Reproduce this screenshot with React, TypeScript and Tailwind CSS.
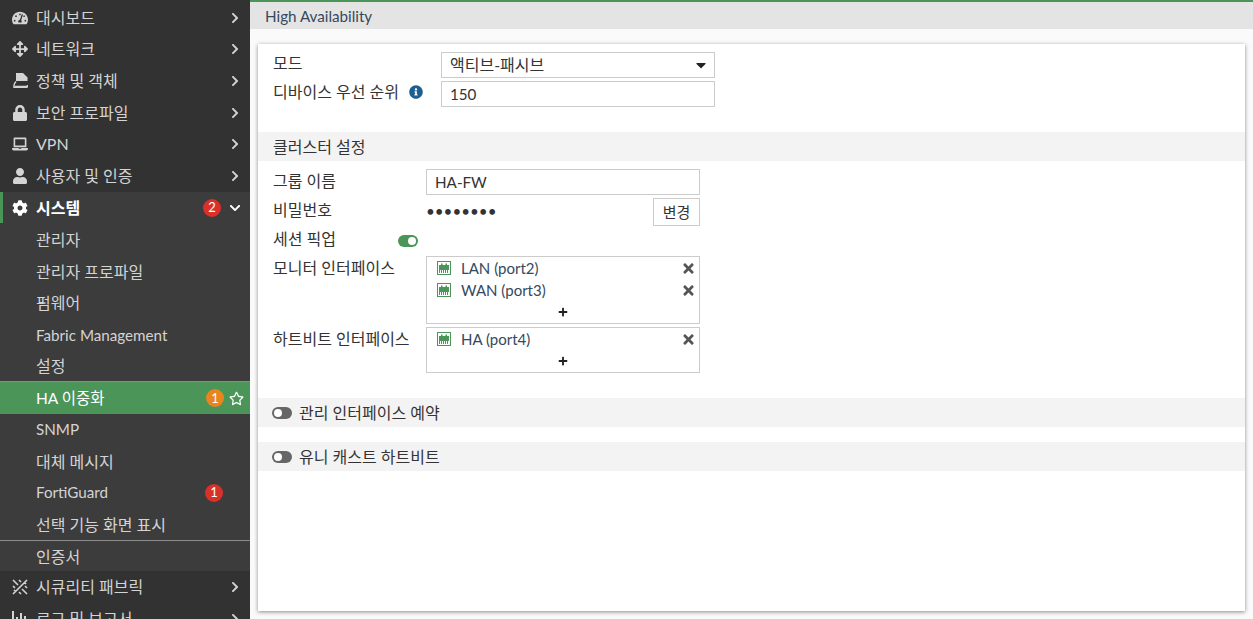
import { ReactNode } from 'react';
import { FaTachometerAlt, FaArrowsAlt, FaLock, FaLaptop, FaUser, FaCog, FaChevronRight, FaChevronDown, FaInfoCircle, FaTimes, FaPlus, FaCaretDown, FaRegStar } from 'react-icons/fa';

const font = 'font-[Lato,"Noto_Sans_CJK_KR",sans-serif]';

const PolicyIcon = () => (
    <svg width="15" height="15" viewBox="0 0 15 15">
        <path d="M3 0h7l4.5 4.5V8H3z" fill="#d4d4d4" />
        <path d="M3 8.5C2 9.5 1 10.5 1 12.5v2h13.5" fill="none" stroke="#d4d4d4" strokeWidth="1.5" />
        <path d="M2 13.5h12.5V12" fill="none" stroke="#d4d4d4" strokeWidth="1.5" />
    </svg>
);

const FabricIcon = () => (
    <svg width="16" height="16" viewBox="0 0 16 16" stroke="#d4d4d4" strokeWidth="1.6">
        <path d="M1 1l5 5M10 10l5 5M15 1L1 15M2 11l2 2M12 3l2 2M7 1l2 2M13 7l2 2M1 7l2 2M7 13l2 2" />
    </svg>
);

const ChartIcon = () => (
    <svg width="16" height="15" viewBox="0 0 16 15" fill="#d4d4d4">
        <path d="M0 0h2v13h14v2H0zM4 6h2v6H4zM8 2h2v10H8zM12 5h2v7h-2z" />
    </svg>
);

const PortIcon = () => (
    <svg width="14" height="14" viewBox="0 0 14 14" className="shrink-0">
        <rect x="0.5" y="0.5" width="13" height="13" fill="#fff" stroke="#4a9557" />
        <path d="M2 4h2V2.5h1.5V4h3V2.5H10V4h2v5H2z" fill="#4a9557" />
        <path d="M2.5 9v3M4.5 9v3M6.5 9v3M8.5 9v3M10.5 9v3" stroke="#4a9557" strokeWidth="1" />
    </svg>
);

const NavRow = ({ icon, label }: { icon: ReactNode, label: string }) => (
    <div className="h-[31.6px] flex items-center pl-[12px] pr-[9px] text-[#d4d4d4] bg-[#323232]">
        <span className="w-[16px] h-[16px] flex items-center justify-center text-[16px] shrink-0">{icon}</span>
        <span className="ml-[8px] flex-1 whitespace-nowrap">{label}</span>
        <FaChevronRight className="text-[12px]" />
    </div>
);

const SubRow = ({ label, border }: { label: string, border?: boolean }) => (
    <div className={`h-[31.6px] flex items-center pl-[36px] pr-[18px] pt-[2px] text-[#d4d4d4] ${border ? 'border-t border-[#8c8c8c]' : ''}`}>
        <span className="flex-1 whitespace-nowrap">{label}</span>
    </div>
);

const Toggle = ({ on }: { on?: boolean }) => (
    <span className={`relative inline-block w-[20px] h-[12px] rounded-full shrink-0 ${on ? 'bg-[#4a9557]' : 'bg-[#666666]'}`}>
        <span className={`absolute top-[2px] w-[8px] h-[8px] rounded-full bg-white ${on ? 'right-[2px]' : 'left-[2px]'}`} />
    </span>
);

const IfaceItem = ({ label }: { label: string }) => (
    <div className="h-[22px] flex items-center pl-[10px] pr-[3px]">
        <PortIcon />
        <span className="ml-[10px] flex-1 text-[#34495e]">{label}</span>
        <FaTimes className="text-[15px] text-[#555555]" />
    </div>
);

const AddRow = () => (
    <div className="h-[21px] flex items-center justify-center">
        <FaPlus className="text-[10px] text-[#222222]" />
    </div>
);

export default function App() {
    return (
        <div className={`${font} w-[1253px] h-[619px] overflow-hidden flex bg-[#fafafa] text-[15.2px]`}>
            {/* Sidebar */}
            <div className="w-[250px] h-[619px] shrink-0 overflow-hidden bg-[#323232] pt-[2px] text-[16px]">
                <NavRow icon={<FaTachometerAlt />} label="대시보드" />
                <NavRow icon={<FaArrowsAlt />} label="네트워크" />
                <NavRow icon={<PolicyIcon />} label="정책 및 객체" />
                <NavRow icon={<FaLock />} label="보안 프로파일" />
                <NavRow icon={<FaLaptop />} label="VPN" />
                <NavRow icon={<FaUser />} label="사용자 및 인증" />
                <div className="bg-[#3c3c3c]">
                    <div className="h-[31.6px] flex items-center pl-[9px] pr-[9px] pt-[1px] border-l-[3px] border-[#4a9557] text-white">
                        <FaCog className="text-[16px] shrink-0" />
                        <span className="ml-[8px] flex-1 font-bold">시스템</span>
                        <span className="w-[18px] h-[18px] mr-[8px] rounded-full bg-[#d9302a] text-[13px] flex items-center justify-center">2</span>
                        <FaChevronDown className="text-[12px]" />
                    </div>
                    <SubRow label="관리자" />
                    <SubRow label="관리자 프로파일" />
                    <SubRow label="펌웨어" />
                    <div className="h-[31.6px] flex items-center pl-[36px] pt-[3px] text-[#d4d4d4] text-[15.2px]">Fabric Management</div>
                    <SubRow label="설정" />
                    <div className="h-[32.4px] flex items-center pl-[36px] pr-[6px] pt-[1px] bg-[#4a9557] border-t border-[#8c8c8c] text-white">
                        <span className="flex-1 text-[15.5px]">HA 이중화</span>
                        <span className="w-[18px] h-[18px] mr-[5px] rounded-full bg-[#e8851e] text-[13px] flex items-center justify-center">1</span>
                        <FaRegStar className="text-[15px]" />
                    </div>
                    <div className="h-[31.6px] flex items-center pl-[36px] pt-[1px] text-[#d4d4d4] text-[15.2px]">SNMP</div>
                    <SubRow label="대체 메시지" />
                    <div className="h-[31.6px] flex items-center pl-[36px] pr-[18px] text-[#d4d4d4] text-[15.2px]">
                        <span className="flex-1">FortiGuard</span>
                        <span className="w-[18px] h-[18px] mr-[9px] rounded-full bg-[#d9302a] text-white text-[13px] flex items-center justify-center">1</span>
                    </div>
                    <SubRow label="선택 기능 화면 표시" />
                    <SubRow label="인증서" border />
                </div>
                <NavRow icon={<FabricIcon />} label="시큐리티 패브릭" />
                <NavRow icon={<ChartIcon />} label="로그 및 보고서" />
            </div>

            {/* Main */}
            <div className="flex-1 min-w-0 border-t-2 border-[#4a9557]">
                <div className="h-[27px] bg-[#e4e4e4] flex items-center pl-[15px] pt-[1px] text-[#34495e]">High Availability</div>
                <div className="mt-[15px] ml-[8px] mr-[8px] h-[567px] bg-white shadow-[0_1px_4px_rgba(0,0,0,0.45)] text-[#333333]">
                    <div className="pt-[8px] pl-[15px]">
                        <div className="flex h-[26px] items-center">
                            <span className="w-[168px] text-[16px] -mt-[4px]">모드</span>
                            <div className="w-[274px] h-[26px] border border-[#cccccc] flex items-center pl-[8px] pr-[5px]">
                                <span className="flex-1 text-[16px]">액티브-패시브</span>
                                <FaCaretDown className="text-[16px] text-[#222222]" />
                            </div>
                        </div>
                        <div className="flex h-[26px] items-center mt-[3px]">
                            <span className="w-[168px] flex items-center text-[16px] -mt-[4px]">
                                디바이스 우선 순위
                                <FaInfoCircle className="ml-[10px] text-[14px] text-[#1f5f8f]" />
                            </span>
                            <div className="w-[274px] h-[26px] border border-[#cccccc] flex items-center pl-[8px]">150</div>
                        </div>
                    </div>

                    <div className="mt-[25px] h-[29px] bg-[#f3f3f3] flex items-center pl-[15px] text-[16px]">클러스터 설정</div>

                    <div className="pl-[15px] pt-[8px] text-[16px]">
                        <div className="flex h-[26px] items-center">
                            <span className="w-[153px] -mt-[3px]">그룹 이름</span>
                            <div className="w-[274px] h-[26px] border border-[#cccccc] flex items-center pl-[8px] text-[15.2px]">HA-FW</div>
                        </div>
                        <div className="flex h-[28px] items-center mt-[3px] w-[427px]">
                            <span className="w-[153px] -mt-[5px]">비밀번호</span>
                            <span className="flex-1 text-[15.2px] leading-none">••••••••</span>
                            <div className="w-[47px] h-[28px] border border-[#cccccc] flex items-center justify-center text-[15px]">변경</div>
                        </div>
                        <div className="flex h-[26px] items-center mt-[2px]">
                            <span className="w-[125px] -mt-[4px]">세션 픽업</span>
                            <Toggle on />
                        </div>
                        <div className="flex mt-[2px]">
                            <span className="w-[153px]">모니터 인터페이스</span>
                            <div className="w-[274px] h-[68px] border border-[#cccccc] text-[15px]">
                                <IfaceItem label="LAN (port2)" />
                                <IfaceItem label="WAN (port3)" />
                                <AddRow />
                            </div>
                        </div>
                        <div className="flex mt-[3px]">
                            <span className="w-[153px]">하트비트 인터페이스</span>
                            <div className="w-[274px] h-[46px] border border-[#cccccc] text-[15px]">
                                <IfaceItem label="HA (port4)" />
                                <AddRow />
                            </div>
                        </div>
                    </div>

                    <div className="mt-[25px] h-[29px] bg-[#f3f3f3] flex items-center pl-[14px] gap-[7px] text-[16px]">
                        <Toggle />
                        <span>관리 인터페이스 예약</span>
                    </div>
                    <div className="mt-[15px] h-[29px] bg-[#f3f3f3] flex items-center pl-[14px] gap-[7px] text-[16px]">
                        <Toggle />
                        <span>유니 캐스트 하트비트</span>
                    </div>
                </div>
            </div>
        </div>
    );
}
